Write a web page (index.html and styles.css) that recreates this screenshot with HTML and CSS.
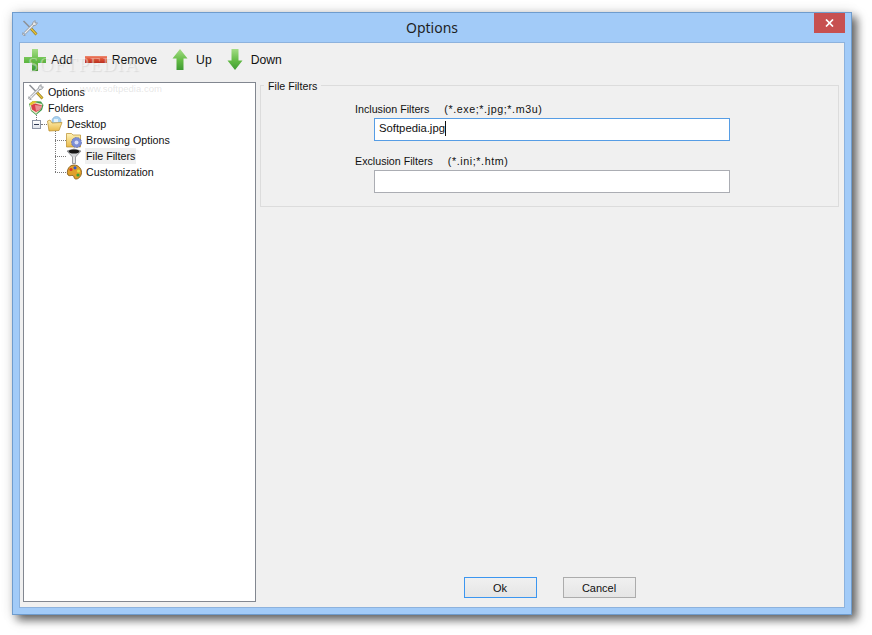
FILE: index.html
```html
<!DOCTYPE html>
<html lang="en">
<head>
<meta charset="utf-8">
<title>Options</title>
<link rel="stylesheet" href="styles.css">
</head>
<body>
<svg class="defs" width="0" height="0" aria-hidden="true">
  <defs>
    <symbol id="tools" viewBox="0 0 16 16">
      <path d="M1.5 1 8 7.5" stroke="#8d9196" stroke-width="1.6" fill="none"/>
      <path d="M8 7.5 14.500 14.500" stroke="#8a7420" stroke-width="2.6" fill="none"/>
      <path d="M8 7.500 14.500 14.500" stroke="#e8c53c" stroke-width="1.4" fill="none"/>
      <path d="M12 4 3 13" stroke="#9a9ea3" stroke-width="2.6" fill="none"/>
      <path d="M12 4 3 13" stroke="#eef0f2" stroke-width="1.1" fill="none"/>
      <path d="M11 2.200 13.200 0.600 13 3 15.400 2.900 13.800 5.200 11.400 5.600 10.400 4.600Z" fill="#e8eaec" stroke="#8d9196" stroke-width=".8"/>
      <path d="M1 12.600 3.400 15.200 1.800 15.600.6 14.400Z" fill="#d6d8da" stroke="#8d9196" stroke-width=".8"/>
    </symbol>
    <linearGradient id="green" x1="0" y1="0" x2="0" y2="1">
      <stop offset="0" stop-color="#a4dd86"/>
      <stop offset=".55" stop-color="#63bb45"/>
      <stop offset="1" stop-color="#3f9a33"/>
    </linearGradient>
    <linearGradient id="red" x1="0" y1="0" x2="0" y2="1">
      <stop offset="0" stop-color="#ee8a70"/>
      <stop offset=".5" stop-color="#dd4b2e"/>
      <stop offset="1" stop-color="#b83020"/>
    </linearGradient>
    <linearGradient id="folder" x1="0" y1="0" x2="0" y2="1">
      <stop offset="0" stop-color="#fff3b8"/>
      <stop offset="1" stop-color="#e8b94a"/>
    </linearGradient>
  </defs>
</svg>

<div class="window">
  <header class="titlebar">
    <svg class="title-icon"><use href="#tools"/></svg>
    <h1 class="title">Options</h1>
    <div class="title-end">
      <div class="close">
        <svg width="9" height="8" viewBox="0 0 9 8"><path d="M1 .5 8 7.500M8 .5 1 7.500" stroke="#fff" stroke-width="1.700" fill="none"/></svg>
      </div>
    </div>
  </header>

  <div class="client">
    <div class="toolbar">
      <div class="tool">
        <svg class="tool-icon" viewBox="0 0 22 22"><path d="M8 0h6v8h8v6h-8v8H8v-8H0V8h8Z" fill="url(#green)"/></svg>
        <span>Add</span>
      </div>
      <div class="tool">
        <svg class="tool-icon" viewBox="0 0 22 22"><rect x="0" y="7" width="22" height="7" fill="url(#red)"/></svg>
        <span>Remove</span>
      </div>
      <div class="tool">
        <svg class="tool-icon" viewBox="0 0 22 22"><path d="M11 0 18.500 9.500H14.500V21H7.500V9.500H3.500Z" fill="url(#green)"/></svg>
        <span>Up</span>
      </div>
      <div class="tool">
        <svg class="tool-icon" viewBox="0 0 22 22"><path d="M7.500 0H14.500V11.500H18.500L11 21 3.500 11.500H7.500Z" fill="url(#green)"/></svg>
        <span>Down</span>
      </div>
    </div>

    <div class="main">
      <ul class="tree">
        <li class="node">
          <div class="row"><svg class="node-icon"><use href="#tools"/></svg><span class="label">Options</span></div>
        </li>
        <li class="node">
          <div class="row">
            <svg class="node-icon" viewBox="0 0 16 16">
              <path d="M1 4 5 1 13 1.500 15.500 5 14 10 8 15 3 11Z" fill="#3f9c4a"/>
              <path d="M1.500 5 6 2 14.500 4 13 9 8 14 3 10Z" fill="#e8e2c4"/>
              <path d="M3 5 7 3.500 14 5.500 12.500 9.500 8 12 4 9.500Z" fill="#d9404a"/>
              <path d="M7 5 14 6 12 9.500 8 11Z" fill="#ea8f96"/>
              <path d="M1.500 3.500 5 1 9 1.500 3 5.500Z" fill="#e7c52f"/>
            </svg>
            <span class="label">Folders</span>
          </div>
          <ul class="branch-root">
            <li class="desktop">
              <div class="row">
                <span class="expander"></span>
                <svg class="node-icon" viewBox="0 0 16 16">
                  <circle cx="9.500" cy="5" r="4.500" fill="#a9d3f2" stroke="#7aa6cc" stroke-width=".6"/>
                  <path d="M7 3h4v3H7Z" fill="#e3f2fb"/>
                  <path d="M.5 5 3 4 5 7 15 6.500 12 14.500 2 15Z" fill="url(#folder)" stroke="#b98d2a" stroke-width=".7"/>
                </svg>
                <span class="label">Desktop</span>
              </div>
              <ul class="children">
                <li class="child">
                  <div class="row">
                    <svg class="node-icon" viewBox="0 0 16 16">
                      <path d="M.5 1.500h5l1.500 1.500h7.500V15H.5Z" fill="url(#folder)" stroke="#b98d2a" stroke-width=".7"/>
                      <circle cx="10.500" cy="10.500" r="5" fill="#7d8fd6" stroke="#5566b0" stroke-width=".7" stroke-dasharray="2 1"/>
                      <circle cx="10.500" cy="10.500" r="2" fill="#d9def5"/>
                    </svg>
                    <span class="label">Browsing Options</span>
                  </div>
                </li>
                <li class="child">
                  <div class="row">
                    <svg class="node-icon" viewBox="0 0 16 16">
                      <path d="M1 3 8 1 15 3 9.500 9V15.500H6.500V9Z" fill="#d2d4d6" stroke="#77797c" stroke-width=".7"/>
                      <ellipse cx="8" cy="3.500" rx="5.500" ry="2" fill="#161616"/>
                      <path d="M7.500 9h1v6h-1Z" fill="#f5f5f5"/>
                    </svg>
                    <span class="label selected">File Filters</span>
                  </div>
                </li>
                <li class="child">
                  <div class="row">
                    <svg class="node-icon" viewBox="0 0 16 16">
                      <path d="M8 1C12.500 1 15.500 4.500 15.500 8.500 15.500 12.500 12 15.500 9.500 15 7.500 14.500 8.500 12 7 11.500 5 11 3.500 12.500 2 11 .3 9 1.500 1 8 1Z" fill="#e0a02c" stroke="#7a5110" stroke-width=".8"/>
                      <circle cx="5" cy="5.500" r="1.600" fill="#d8342c"/>
                      <circle cx="9" cy="3.800" r="1.600" fill="#2f56c9"/>
                      <circle cx="12.500" cy="7" r="1.600" fill="#e7dc3f"/>
                      <circle cx="12" cy="11" r="1.600" fill="#38a13c"/>
                    </svg>
                    <span class="label">Customization</span>
                  </div>
                </li>
              </ul>
            </li>
          </ul>
        </li>
      </ul>

      <div class="panel">
        <section class="group">
          <span class="legend">File Filters</span>
          <div class="field">
            <div class="field-label"><span>Inclusion Filters</span><span class="hint">(*.exe;*.jpg;*.m3u)</span></div>
            <div class="input focused">Softpedia.jpg<span class="caret"></span></div>
          </div>
          <div class="field">
            <div class="field-label"><span>Exclusion Filters</span><span class="hint">(*.ini;*.htm)</span></div>
            <div class="input"></div>
          </div>
        </section>
        <div class="actions">
          <button class="btn btn-default" type="button">Ok</button>
          <button class="btn" type="button">Cancel</button>
        </div>
      </div>
    </div>

    <div class="watermark">
      <span class="wm-big">SOFTPEDIA</span>
      <span class="wm-small">www.softpedia.com</span>
    </div>
  </div>
</div>
</body>
</html>
```

FILE: styles.css
```css
* {
  box-sizing: border-box;
}

html,
body {
  margin: 0;
  height: 100%;
  background: #fff;
}

body {
  padding: 12px 0 0 12px;
  overflow: hidden;
  font-family: "Liberation Sans", Arial, sans-serif;
  font-size: 10.7px;
  color: #111;
}

.defs {
  position: absolute;
}

.window {
  width: 840px;
  height: 603px;
  display: flex;
  flex-direction: column;
  padding: 0 6px 6px;
  background: #a2cbf8;
  border: 1px solid #6f9ccd;
  box-shadow: 5px 5px 9px rgba(0, 0, 0, 0.6), 0 0 12px rgba(0, 0, 0, 0.12);
}

.titlebar {
  flex: none;
  height: 29px;
  display: grid;
  grid-template-columns: 1fr auto 1fr;
  align-items: center;
}

.title-icon {
  width: 16px;
  height: 16px;
  margin: 1px 0 0 3px;
}

.title {
  margin: 0;
  font-family: "Noto Sans", "Liberation Sans", sans-serif;
  font-size: 14px;
  font-weight: 400;
  color: #1f1f1f;
}

.title-end {
  display: flex;
  justify-content: flex-end;
  align-self: start;
}

.close {
  width: 31px;
  height: 20px;
  display: flex;
  align-items: center;
  justify-content: center;
  background: #c75050;
}

.client {
  position: relative;
  flex: 1;
  min-height: 0;
  display: flex;
  flex-direction: column;
  background: #f0f0f0;
  border: 1px solid #8db2dd;
}

.watermark {
  position: absolute;
  left: 8px;
  top: 10px;
  width: 130px;
  height: 42px;
  pointer-events: none;
}

.wm-big {
  position: absolute;
  left: 0;
  top: 0;
  font-family: "Liberation Serif", serif;
  font-size: 19px;
  letter-spacing: 1px;
  line-height: 24px;
  color: rgba(255, 255, 255, 0.4);
  text-shadow: 1px 1px 1px rgba(110, 110, 110, 0.16);
  white-space: nowrap;
}

.wm-small {
  position: absolute;
  left: 52px;
  top: 30px;
  font-size: 9.5px;
  line-height: 12px;
  color: rgba(170, 170, 170, 0.3);
  white-space: nowrap;
}

.toolbar {
  flex: none;
  height: 39px;
  display: flex;
  align-items: center;
  gap: 12px;
  padding: 0 0 6px 4px;
}

.tool {
  display: flex;
  align-items: center;
  gap: 5px;
  font-size: 12.2px;
}

.tool-icon {
  display: block;
  width: 22px;
  height: 22px;
}

.main {
  flex: 1;
  min-height: 0;
  display: flex;
  gap: 4px;
  padding: 0 5px 5px 3px;
}

.tree,
.tree ul {
  list-style: none;
  margin: 0;
  padding: 0;
}

.tree {
  flex: none;
  width: 233px;
  padding: 1px 0 0 4px;
  background: #fff;
  border: 1px solid #828790;
}

.row {
  height: 16px;
  display: flex;
  align-items: center;
  white-space: nowrap;
}

.node-icon {
  flex: none;
  width: 16px;
  height: 16px;
}

.label {
  margin-left: 3px;
  padding: 0 1px;
  line-height: 16px;
}

.selected {
  background: #f0f0f0;
}

.tree .branch-root {
  position: relative;
  padding-left: 4px;
}

.branch-root::before {
  content: "";
  position: absolute;
  left: 8px;
  top: -1px;
  height: 5px;
  border-left: 1px dotted #777;
}

.expander {
  position: relative;
  flex: none;
  width: 9px;
  height: 9px;
  margin-right: 6px;
  background: linear-gradient(#fff, #dfe3ea);
  border: 1px solid #8b93a3;
}

.expander::before {
  content: "";
  position: absolute;
  left: 1px;
  top: 3px;
  width: 5px;
  height: 1px;
  background: #2f3a52;
}

.expander::after {
  content: "";
  position: absolute;
  left: 8px;
  top: 3px;
  width: 6px;
  border-top: 1px dotted #777;
}

.tree .children {
  position: relative;
  padding-left: 34px;
}

.children::before {
  content: "";
  position: absolute;
  left: 23px;
  top: -1px;
  height: 41px;
  border-left: 1px dotted #777;
}

.child {
  position: relative;
}

.child::before {
  content: "";
  position: absolute;
  left: -11px;
  top: 8px;
  width: 11px;
  border-top: 1px dotted #777;
}

.panel {
  flex: 1;
  min-width: 0;
  display: flex;
  flex-direction: column;
  padding: 3px 0 4px;
}

.group {
  position: relative;
  height: 122px;
  padding: 15px 108px 0 94px;
  border: 1px solid #dcdcdc;
}

.legend {
  position: absolute;
  left: 3px;
  top: -7px;
  padding: 0 4px;
  line-height: 14px;
  background: #f0f0f0;
}

.field + .field {
  margin-top: 12px;
}

.field-label {
  height: 17px;
  padding-bottom: 1px;
  display: flex;
  gap: 15px;
  align-items: center;
  line-height: 16px;
}

.hint {
  letter-spacing: 0.6px;
}

.input {
  height: 23px;
  margin-left: 19px;
  padding: 0 0 3px 4px;
  display: flex;
  align-items: center;
  font-size: 11.3px;
  background: #fff;
  border: 1px solid #abadb3;
}

.focused {
  border-color: #569de5;
}

.caret {
  width: 1px;
  height: 15px;
  background: #111;
}

.actions {
  margin-top: auto;
  display: flex;
  justify-content: center;
  gap: 26px;
}

.btn {
  width: 73px;
  height: 21px;
  padding: 0;
  font: inherit;
  font-size: 11px;
  color: #111;
  background: linear-gradient(#f0f0f0, #e5e5e5);
  border: 1px solid #acacac;
}

.btn-default {
  border-color: #3c96f0;
}
```
